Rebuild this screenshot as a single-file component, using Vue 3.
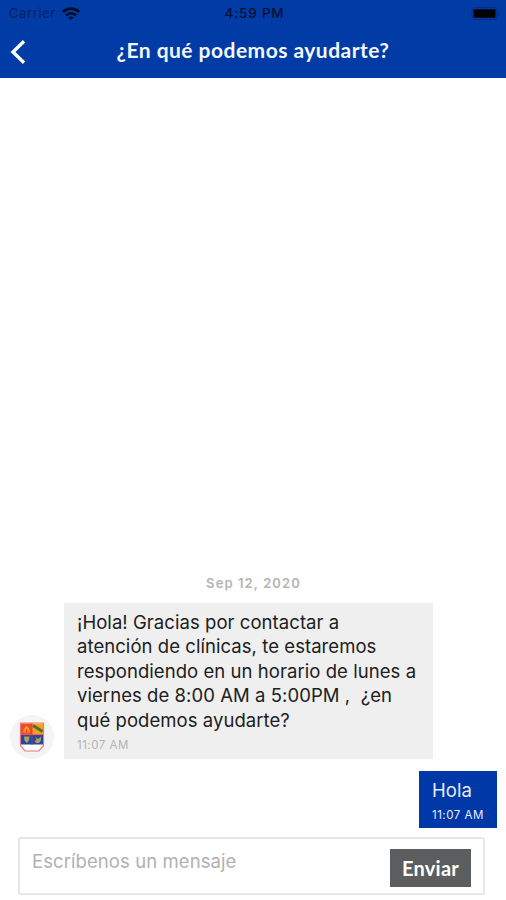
<template>
    <div class="screen">
        <header class="header">
            <div class="status-bar">
                <div class="carrier">
                    <span class="carrier-name">Carrier</span>
                    <svg class="wifi" viewBox="0 0 18 13" width="18" height="13">
                        <g fill="none" stroke="#020c24" stroke-width="2.6">
                            <path d="M.8 5a11.6 11.6 0 0 1 16.400 0" />
                            <path d="M3.900 8.300a7.200 7.200 0 0 1 10.200 0" />
                        </g>
                        <path d="M6.500 10.800a3.600 3.600 0 0 1 5 0L9 13z" fill="#020c24" />
                    </svg>
                </div>
                <span class="clock">4:59 PM</span>
                <div class="battery-wrap">
                    <svg class="battery" viewBox="0 0 29 13" width="29" height="13">
                        <rect x="1" y="0.5" width="25" height="12" rx="3" fill="none" stroke="#052c83" />
                        <rect x="2.500" y="2.300" width="22" height="8.500" rx="1" fill="#000208" />
                        <path d="M27.300 4.500q2 2 0 4z" fill="#052c83" />
                    </svg>
                </div>
            </div>
            <div class="nav">
                <button class="btn-back" aria-label="Atrás">
                    <svg viewBox="0 0 18 26" width="18" height="26">
                        <path d="M15 2.200L4 13l11 10.800" fill="none" stroke="#fff" stroke-width="3.400" />
                    </svg>
                </button>
                <h1 class="title">¿En qué podemos ayudarte?</h1>
            </div>
        </header>

        <main class="chat">
            <div class="date"><span>Sep 12, 2020</span></div>
            <div
                v-for="message in messages"
                :key="message.id"
                class="row"
                :class="{'row-own': message.own}"
            >
                <div v-if="!message.own" class="avatar">
                    <svg viewBox="0 0 26 30" width="26" height="30">
                        <path d="M1.500 1h23v22.500l-4.500 5.500H6l-4.500-5.500z" fill="#fff" stroke="#e87880" stroke-width="1.200" />
                        <path d="M2 1.500h11v11H2z" fill="#f04a28" />
                        <path d="M13 1.500h11v11H13z" fill="#f6a023" />
                        <path d="M2 13h22v9.500H2z" fill="#1d4aa3" />
                        <path d="M4 10.500l1-4 2.500-3 2.500 3 1 4z" fill="#f99a1f" />
                        <path d="M7 7.500h1.200v3H7z" fill="#d93425" />
                        <path d="M14 3.500l9.500 6" stroke="#4a702c" stroke-width="2.800" />
                        <path d="M5 14.500h5.500l-.5 4-2.200 2.500-2.300-2.500zM16 14.500l2 2h2l2-2v4l-2 2.500h-3l-1.500-2 2-1z" fill="#b49a5c" />
                        <path d="M13 1v22M2 12.700h22" stroke="#d72d42" stroke-width=".8" />
                    </svg>
                </div>
                <div class="bubble">
                    <p class="text">{{ message.text }}</p>
                    <span class="time">{{ message.time }}</span>
                </div>
            </div>
        </main>

        <form class="composer" @submit.prevent="send">
            <input v-model="draft" class="input" type="text" placeholder="Escríbenos un mensaje">
            <button class="btn-send" type="submit">Enviar</button>
        </form>
    </div>
</template>

<script setup>

import {ref} from "vue";

const draft = ref('');
const messages = ref([
    {
        id: 1,
        own: false,
        text: '¡Hola! Gracias por contactar a\natención de clínicas, te estaremos\nrespondiendo en un horario de lunes a\nviernes de 8:00 AM a 5:00PM ,  ¿en\nqué podemos ayudarte?',
        time: '11:07 AM',
    },
    {id: 2, own: true, text: 'Hola', time: '11:07 AM'},
]);

function send() {
    const text = draft.value.trim();

    if (!text) {
        return;
    }

    messages.value.push({
        id: messages.value.length + 1,
        own: true,
        text,
        time: new Date().toLocaleTimeString('en-US', {hour: 'numeric', minute: '2-digit'}),
    });
    draft.value = '';
}
</script>

<style>
body {
    margin: 0;
    background: #fefefe;
}
</style>

<style scoped>
.screen {
    display: flex;
    flex-direction: column;
    box-sizing: border-box;
    height: 900px;
    padding-bottom: 5px;
    background: #fefefe;
    font-family: Inter, "Liberation Sans", sans-serif;
}

.header {
    box-sizing: border-box;
    flex-shrink: 0;
    height: 78px;
    background: #003ba6;
}

.status-bar {
    display: grid;
    grid-template-columns: 1fr auto 1fr;
    align-items: center;
    height: 26px;
    padding: 0 6px 0 9px;
    font-size: 13px;
    line-height: 26px;
    color: #04112f;
}

.carrier {
    display: flex;
    align-items: center;
    gap: 6px;
}

.carrier-name {
    color: #06235f;
    letter-spacing: 0.6px;
}

.clock {
    font-weight: 500;
    font-size: 13.500px;
    letter-spacing: 0.8px;
}

.battery-wrap {
    display: flex;
    justify-content: flex-end;
}

.nav {
    display: grid;
    grid-template-columns: 40px 1fr 40px;
    align-items: center;
    height: 50px;
}

.btn-back {
    display: flex;
    padding: 1px 0 0 9px;
    background: none;
    border: none;
    cursor: pointer;
}

.title {
    margin: 0;
    font-family: Lato, sans-serif;
    font-size: 21px;
    font-weight: 700;
    line-height: 48px;
    letter-spacing: 0.47px;
    text-align: center;
    white-space: nowrap;
    color: #f4f7ff;
    padding-bottom: 2px;
}

.chat {
    display: flex;
    flex: 1;
    flex-direction: column;
    justify-content: flex-end;
    min-height: 0;
    padding: 0 9px 9px 10px;
}

.date {
    margin-bottom: 11px;
    text-align: center;
    font-size: 13px;
    font-weight: 600;
    line-height: 18px;
    letter-spacing: 1.100px;
    color: #b5b5b5;
}

.row {
    display: flex;
    align-items: flex-end;
    gap: 10px;
    margin-bottom: 12px;
}

.row:last-child {
    margin-bottom: 0;
}

.row-own {
    justify-content: flex-end;
}

.avatar {
    display: flex;
    align-items: center;
    justify-content: center;
    flex-shrink: 0;
    width: 44px;
    height: 44px;
    border-radius: 50%;
    background: #f4f4f4;
}

.bubble {
    box-sizing: border-box;
    width: 369px;
    height: 156px;
    padding: 7px 12px 0 13px;
    background: #efefef;
}

.text {
    margin: 0;
    font-size: 18.500px;
    line-height: 24.400px;
    letter-spacing: 0.060px;
    white-space: pre;
    color: #202020;
}

.time {
    display: block;
    margin-top: 5px;
    font-size: 11.500px;
    line-height: 16px;
    letter-spacing: 0.500px;
    color: #b3b3b3;
}

.row-own .bubble {
    width: 78px;
    height: 57px;
    background: #0038a8;
}

.row-own .text,
.row-own .time {
    color: #e6edff;
}

.composer {
    display: flex;
    align-items: flex-start;
    box-sizing: border-box;
    flex-shrink: 0;
    height: 58px;
    margin: 0 21px 0 18px;
    padding: 10px 12px 0 12px;
    border: 2px solid #e7e7e7;
    border-radius: 3px;
    background: #fff;
}

.input {
    flex: 1;
    min-width: 0;
    height: 24px;
    padding: 0;
    border: none;
    outline: none;
    background: none;
    font-family: inherit;
    font-size: 18.500px;
    letter-spacing: 0.080px;
    color: #202020;
}

.input::placeholder {
    color: #b1b1b1;
    opacity: 1;
}

.btn-send {
    width: 81px;
    height: 38px;
    padding: 0;
    border: none;
    background: #5c5d5f;
    font-family: Lato, sans-serif;
    font-size: 20px;
    font-weight: 700;
    letter-spacing: 0.200px;
    color: #fff;
    cursor: pointer;
}
</style>
